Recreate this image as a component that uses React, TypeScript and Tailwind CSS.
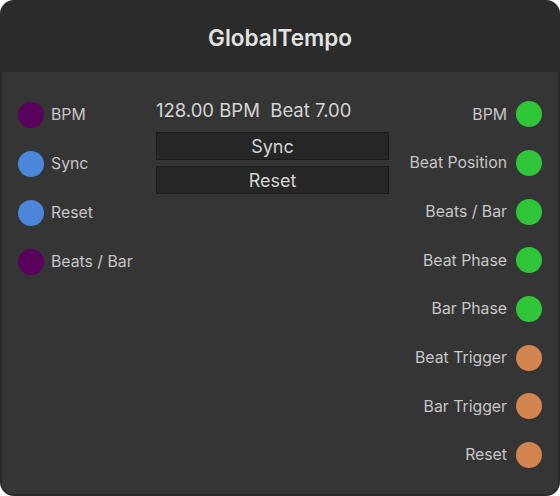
import React from "react";

const inputs = [
  { label: "BPM", color: "bg-[#5a015e]" },
  { label: "Sync", color: "bg-[#4b86da]" },
  { label: "Reset", color: "bg-[#4b86da]" },
  { label: "Beats / Bar", color: "bg-[#5a015e]" },
];

const outputs = [
  { label: "BPM", color: "bg-[#30c63a]" },
  { label: "Beat Position", color: "bg-[#30c63a]" },
  { label: "Beats / Bar", color: "bg-[#30c63a]" },
  { label: "Beat Phase", color: "bg-[#30c63a]" },
  { label: "Bar Phase", color: "bg-[#30c63a]" },
  { label: "Beat Trigger", color: "bg-[#d3844f]" },
  { label: "Bar Trigger", color: "bg-[#d3844f]" },
  { label: "Reset", color: "bg-[#d3844f]" },
];

function Pin({ color }: { color: string }) {
  return <div className={`w-[26px] h-[26px] rounded-full shrink-0 ${color}`} />;
}

export default function App() {
  return (
    <div
      className="w-[560px] h-[496px] bg-white"
      style={{ fontFamily: "Inter, 'Noto Sans', sans-serif" }}
    >
      <div className="w-full h-full rounded-[14px] overflow-hidden bg-[#353535] border-2 border-[#2a2a2a] flex flex-col">
        {/* title bar */}
        <div className="h-[70px] shrink-0 bg-[#2b2b2b] flex items-center justify-center text-[22.5px] font-semibold text-[#e2e2e2] pt-[2px]">
          GlobalTempo
        </div>

        <div className="flex flex-1 pt-[18px]">
          {/* inputs */}
          <div className="flex flex-col pl-[16px] w-[154px] shrink-0">
            {inputs.map((p) => (
              <div key={p.label} className="h-[49px] flex items-center gap-[7px]">
                <Pin color={p.color} />
                <span className="text-[15.8px] text-[#c6c6c6]">{p.label}</span>
              </div>
            ))}
          </div>

          {/* controls */}
          <div className="flex flex-col w-[233px] shrink-0 pt-[8px]">
            <div className="text-[18.5px] text-[#d4d4d4] leading-[24px] whitespace-pre">
              128.00 BPM  Beat 7.00
            </div>
            <div className="mt-[10px] h-[28px] bg-[#262626] border border-[#1c1c1c] flex items-center justify-center text-[18px] text-[#d4d4d4]">
              Sync
            </div>
            <div className="mt-[6px] h-[28px] bg-[#262626] border border-[#1c1c1c] flex items-center justify-center text-[18px] text-[#d4d4d4]">
              Reset
            </div>
          </div>

          {/* outputs */}
          <div className="flex flex-col flex-1 items-end pr-[16px]">
            {outputs.map((p, i) => (
              <div key={i} className="h-[48.7px] flex items-center gap-[9px]">
                <span className="text-[15.8px] text-[#c6c6c6]">{p.label}</span>
                <Pin color={p.color} />
              </div>
            ))}
          </div>
        </div>
      </div>
    </div>
  );
}
